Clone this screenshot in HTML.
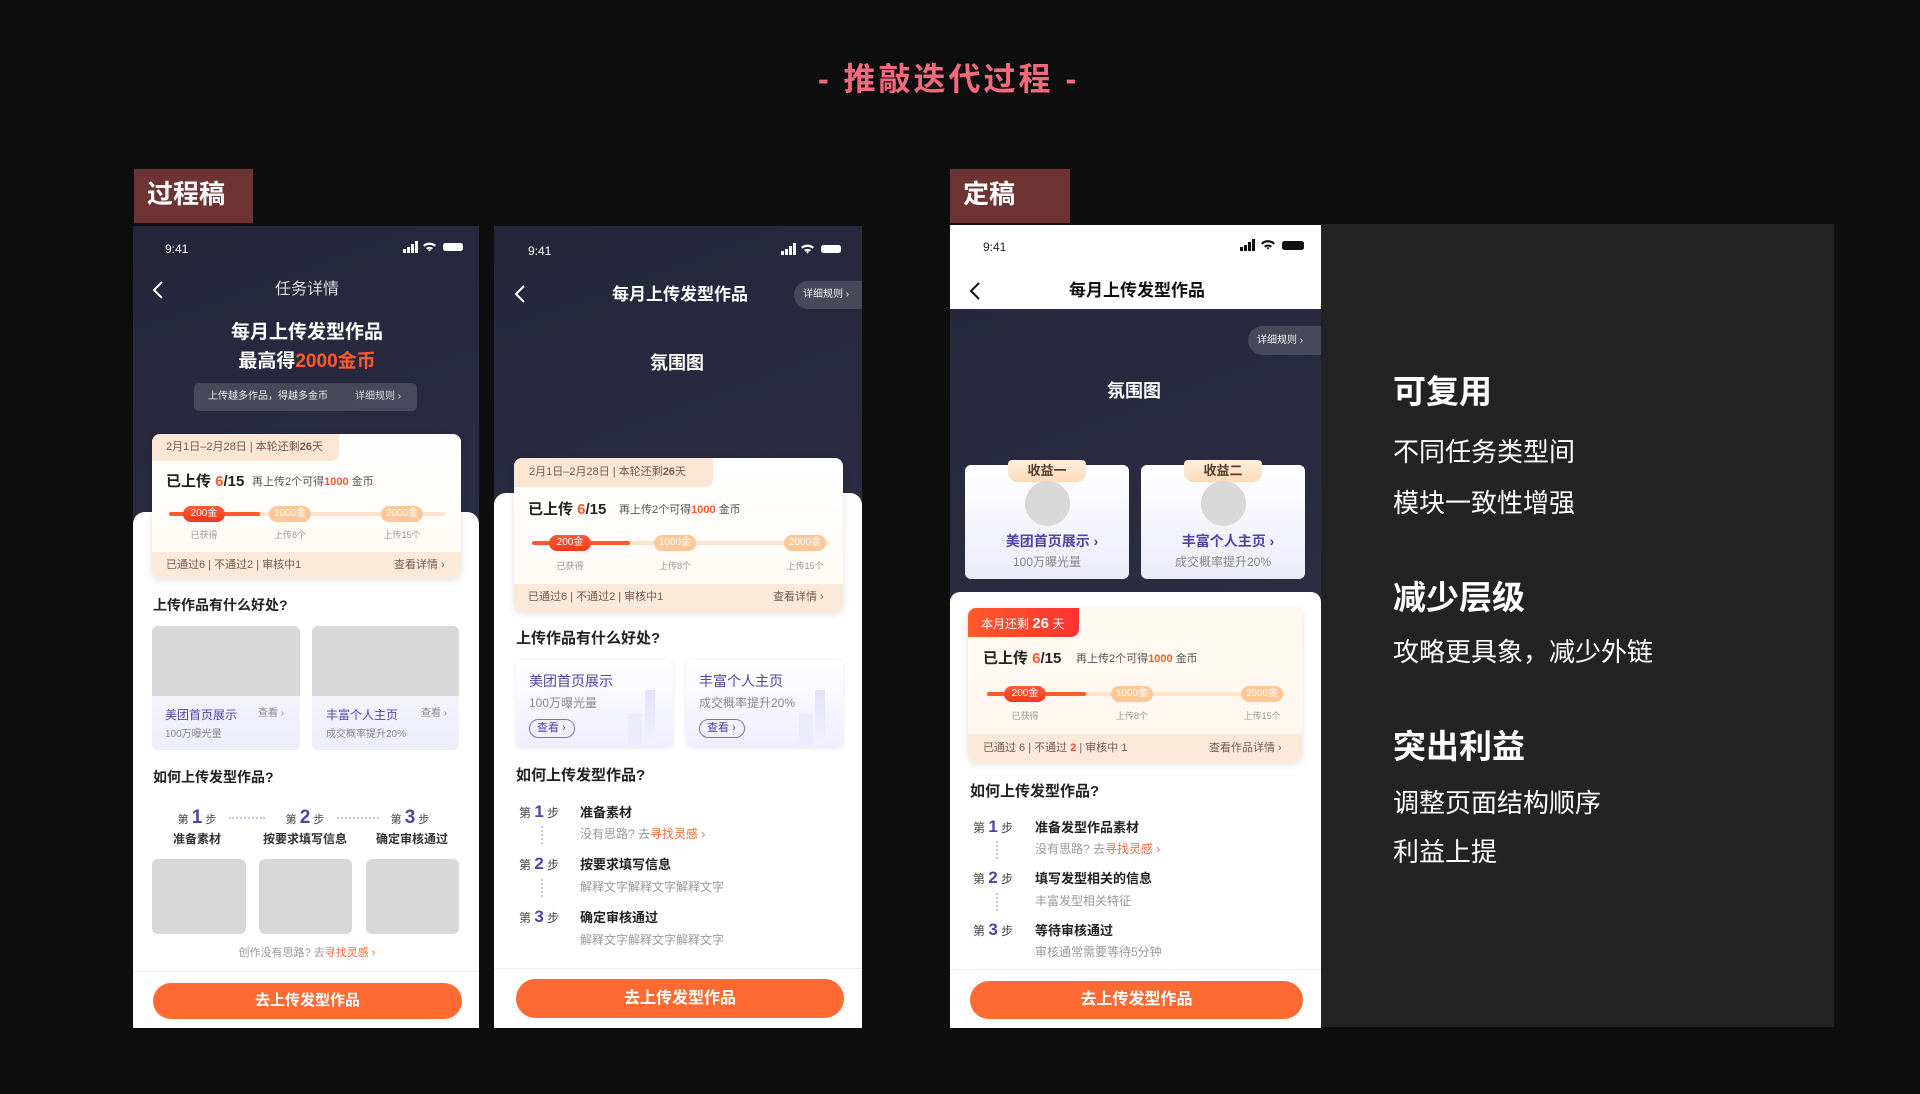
<!DOCTYPE html>
<html><head><meta charset="utf-8"><style>
*{margin:0;padding:0;box-sizing:border-box}
body{width:1920px;height:1094px;background:#0e0e0e;position:relative;overflow:hidden;font-family:"Liberation Sans","Noto Sans CJK SC",sans-serif}
div,span.a{position:absolute}
.t{position:absolute;white-space:nowrap;line-height:1}
.c{transform:translateX(-50%)}
.b{font-weight:bold}
.dark{background:linear-gradient(160deg,#25263a 0%,#2c2d44 55%,#3d3d5c 100%)}
.pill{position:absolute;height:16px;border-radius:8px;color:#fff;font-size:10px;line-height:16px;text-align:center;width:42px}
.on{background:linear-gradient(#ff5a3a,#f03a1a)}
.off{background:#ffc795}
.lab{font-size:9px;color:#999}
.pur{color:#4f44a8}
.g{color:#888}
.btn{position:absolute;background:#ff6a33;border-radius:20px;color:#fff;font-weight:bold;text-align:center}
</style></head><body>

<div class="t b" style="left:818px;top:63px;font-size:32px;color:#f26a7c;letter-spacing:3px">- 推敲迭代过程 -</div>

<!-- labels -->
<div style="left:134px;top:169px;width:119px;height:54px;background:#6e3434"></div>
<div class="t b" style="left:147px;top:181px;font-size:26px;color:#fff">过程稿</div>
<div style="left:950px;top:169px;width:120px;height:54px;background:#6e3434"></div>
<div class="t b" style="left:963px;top:181px;font-size:26px;color:#fff">定稿</div>

<!-- right panel -->
<div style="left:1321px;top:224px;width:513px;height:803px;background:#232323"></div>
<div class="t b" style="left:1393px;top:375px;font-size:33px;color:#fff">可复用</div>
<div class="t" style="left:1393px;top:439px;font-size:26px;color:#fff">不同任务类型间</div>
<div class="t" style="left:1393px;top:490px;font-size:26px;color:#fff">模块一致性增强</div>
<div class="t b" style="left:1393px;top:581px;font-size:33px;color:#fff">减少层级</div>
<div class="t" style="left:1393px;top:639px;font-size:26px;color:#fff">攻略更具象，减少外链</div>
<div class="t b" style="left:1393px;top:730px;font-size:33px;color:#fff">突出利益</div>
<div class="t" style="left:1393px;top:790px;font-size:26px;color:#fff">调整页面结构顺序</div>
<div class="t" style="left:1393px;top:839px;font-size:26px;color:#fff">利益上提</div>

<!-- ============ PHONE 1 ============ -->
<div class="dark" style="left:133px;top:226px;width:346px;height:802px"></div>
<div class="t" style="left:165px;top:243px;font-size:12px;color:#fff">9:41</div>
<svg class="a" style="position:absolute;left:403px;top:241px" width="62" height="12"><g fill="#fff"><rect x="0" y="8" width="3" height="4"/><rect x="4" y="6" width="3" height="6"/><rect x="8" y="3" width="3" height="9"/><rect x="12" y="0" width="3" height="12"/><path d="M20 4a10 10 0 0 1 13 0l-1.5 1.6a8 8 0 0 0-10 0z M23 7a6 6 0 0 1 7 0l-1.5 1.6a3.5 3.5 0 0 0-4 0z M26.5 10.5l1.5-1.5-1.5-1-1.5 1z"/><rect x="40" y="2" width="20" height="8" rx="2.5"/></g></svg>
<svg style="position:absolute;left:152px;top:281px" width="12" height="18"><path d="M10 1L2 9l8 8" stroke="#fff" stroke-width="2" fill="none"/></svg>
<div class="t c" style="left:307px;top:282px;font-size:16px;color:#ddd">任务详情</div>
<div class="t c b" style="left:307px;top:323px;font-size:19px;color:#fff">每月上传发型作品</div>
<div class="t c b" style="left:307px;top:352px;font-size:19px;color:#fff">最高得<span style="color:#ff5a2a">2000金币</span></div>
<div style="left:194px;top:383px;width:223px;height:28px;border-radius:5px;background:rgba(255,255,255,.15)"></div>
<div class="t" style="left:208px;top:392px;font-size:10px;color:#eee">上传越多作品，得越多金币</div>
<div class="t" style="left:355px;top:392px;font-size:10px;color:#ddd">详细规则 ›</div>
<div style="left:133px;top:512px;width:346px;height:516px;background:#fff;border-radius:12px 12px 0 0"></div>
<!-- card -->
<div style="left:152px;top:434px;width:309px;height:144px;background:linear-gradient(#fff,#fffaf5);border-radius:8px;box-shadow:0 2px 8px rgba(0,0,0,.12)"></div>
<div style="left:152px;top:434px;width:187px;height:27px;background:#fbe6d4;border-radius:8px 0 8px 0"></div>
<div class="t" style="left:166px;top:442px;font-size:11px;color:#7a5a48">2月1日–2月28日 | 本轮还剩<b>26</b>天</div>
<div class="t b" style="left:166px;top:474px;font-size:15px;color:#222">已上传 <span style="color:#ff5a2a">6</span>/15</div>
<div class="t" style="left:252px;top:477px;font-size:11px;color:#555">再上传2个可得<b style="color:#ff5a2a">1000</b> 金币</div>
<div style="left:169px;top:512px;width:276px;height:4px;border-radius:2px;background:#fde3cc"></div>
<div style="left:169px;top:512px;width:91px;height:4px;border-radius:2px;background:#ff5a2a"></div>
<div class="pill on" style="left:183px;top:506px">200金</div>
<div class="pill off" style="left:269px;top:506px">1000金</div>
<div class="pill off" style="left:381px;top:506px">2000金</div>
<div class="t c lab" style="left:204px;top:531px">已获得</div>
<div class="t c lab" style="left:290px;top:531px">上传8个</div>
<div class="t c lab" style="left:402px;top:531px">上传15个</div>
<div style="left:152px;top:552px;width:309px;height:26px;background:#fbe9d9;border-radius:0 0 8px 8px"></div>
<div class="t" style="left:166px;top:560px;font-size:11px;color:#7a5a48">已通过6 | 不通过2 | 审核中1</div>
<div class="t" style="left:394px;top:560px;font-size:11px;color:#7a5a48">查看详情 ›</div>
<div class="t b" style="left:153px;top:598px;font-size:14px;color:#222">上传作品有什么好处?</div>
<div style="left:152px;top:626px;width:148px;height:124px;border-radius:6px;overflow:hidden;background:linear-gradient(#f8f8ff,#eeedfc)"><div style="left:0;top:0;width:148px;height:70px;background:#d8d8d8"></div></div>
<div style="left:312px;top:626px;width:147px;height:124px;border-radius:6px;overflow:hidden;background:linear-gradient(#f8f8ff,#eeedfc)"><div style="left:0;top:0;width:147px;height:70px;background:#d8d8d8"></div></div>
<div class="t pur" style="left:165px;top:709px;font-size:12px">美团首页展示</div>
<div class="t g" style="left:258px;top:709px;font-size:10px">查看 ›</div>
<div class="t g" style="left:165px;top:730px;font-size:10px">100万曝光量</div>
<div class="t pur" style="left:326px;top:709px;font-size:12px">丰富个人主页</div>
<div class="t g" style="left:421px;top:709px;font-size:10px">查看 ›</div>
<div class="t g" style="left:326px;top:730px;font-size:10px">成交概率提升20%</div>
<div class="t b" style="left:153px;top:770px;font-size:14px;color:#222">如何上传发型作品?</div>
<div class="t c" style="left:197px;top:808px;font-size:11px;color:#444">第 <b class="pur" style="font-size:19px">1</b> 步</div>
<div class="t c" style="left:305px;top:808px;font-size:11px;color:#444">第 <b class="pur" style="font-size:19px">2</b> 步</div>
<div class="t c" style="left:410px;top:808px;font-size:11px;color:#444">第 <b class="pur" style="font-size:19px">3</b> 步</div>
<div style="left:229px;top:817px;width:36px;border-top:2px dotted #c8c4f0"></div>
<div style="left:337px;top:817px;width:42px;border-top:2px dotted #c8c4f0"></div>
<div class="t c b" style="left:197px;top:833px;font-size:12px;color:#333">准备素材</div>
<div class="t c b" style="left:305px;top:833px;font-size:12px;color:#333">按要求填写信息</div>
<div class="t c b" style="left:412px;top:833px;font-size:12px;color:#333">确定审核通过</div>
<div style="left:152px;top:859px;width:94px;height:75px;background:#d8d8d8;border-radius:6px"></div>
<div style="left:259px;top:859px;width:93px;height:75px;background:#d8d8d8;border-radius:6px"></div>
<div style="left:366px;top:859px;width:93px;height:75px;background:#d8d8d8;border-radius:6px"></div>
<div class="t c" style="left:307px;top:948px;font-size:11px;color:#999">创作没有思路? 去<span style="color:#ff6a33">寻找灵感 ›</span></div>
<div style="left:133px;top:971px;width:346px;height:1px;background:#eee"></div>
<div class="btn" style="left:153px;top:983px;width:309px;height:36px;line-height:36px;font-size:15px">去上传发型作品</div>

<!-- ============ PHONE 2 ============ -->
<div class="dark" style="left:494px;top:226px;width:368px;height:802px"></div>
<div class="t" style="left:528px;top:245px;font-size:12px;color:#fff">9:41</div>
<svg style="position:absolute;left:781px;top:243px" width="62" height="12"><g fill="#fff"><rect x="0" y="8" width="3" height="4"/><rect x="4" y="6" width="3" height="6"/><rect x="8" y="3" width="3" height="9"/><rect x="12" y="0" width="3" height="12"/><path d="M20 4a10 10 0 0 1 13 0l-1.5 1.6a8 8 0 0 0-10 0z M23 7a6 6 0 0 1 7 0l-1.5 1.6a3.5 3.5 0 0 0-4 0z M26.5 10.5l1.5-1.5-1.5-1-1.5 1z"/><rect x="40" y="2" width="20" height="8" rx="2.5"/></g></svg>
<svg style="position:absolute;left:514px;top:285px" width="12" height="18"><path d="M10 1L2 9l8 8" stroke="#fff" stroke-width="2" fill="none"/></svg>
<div class="t c b" style="left:680px;top:286px;font-size:17px;color:#fff">每月上传发型作品</div>
<div style="left:794px;top:281px;width:68px;height:28px;border-radius:14px 0 0 14px;background:rgba(255,255,255,.15)"></div>
<div class="t" style="left:803px;top:290px;font-size:10px;color:#eee">详细规则 ›</div>
<div class="t c b" style="left:677px;top:354px;font-size:18px;color:#fff">氛围图</div>
<div style="left:494px;top:493px;width:368px;height:535px;background:#fff;border-radius:12px 12px 0 0"></div>
<div style="left:514px;top:458px;width:329px;height:154px;background:linear-gradient(#fff,#fffaf5);border-radius:8px;box-shadow:0 2px 8px rgba(0,0,0,.12)"></div>
<div style="left:514px;top:458px;width:199px;height:29px;background:#fbe6d4;border-radius:8px 0 8px 0"></div>
<div class="t" style="left:529px;top:467px;font-size:11px;color:#7a5a48">2月1日–2月28日 | 本轮还剩<b>26</b>天</div>
<div class="t b" style="left:528px;top:502px;font-size:15px;color:#222">已上传 <span style="color:#ff5a2a">6</span>/15</div>
<div class="t" style="left:619px;top:505px;font-size:11px;color:#555">再上传2个可得<b style="color:#ff5a2a">1000</b> 金币</div>
<div style="left:532px;top:541px;width:298px;height:4px;border-radius:2px;background:#fde3cc"></div>
<div style="left:532px;top:541px;width:98px;height:4px;border-radius:2px;background:#ff5a2a"></div>
<div class="pill on" style="left:549px;top:535px">200金</div>
<div class="pill off" style="left:654px;top:535px">1000金</div>
<div class="pill off" style="left:784px;top:535px">2000金</div>
<div class="t c lab" style="left:570px;top:562px">已获得</div>
<div class="t c lab" style="left:675px;top:562px">上传8个</div>
<div class="t c lab" style="left:805px;top:562px">上传15个</div>
<div style="left:514px;top:584px;width:329px;height:28px;background:#fbe9d9;border-radius:0 0 8px 8px"></div>
<div class="t" style="left:528px;top:592px;font-size:11px;color:#7a5a48">已通过6 | 不通过2 | 审核中1</div>
<div class="t" style="left:773px;top:592px;font-size:11px;color:#7a5a48">查看详情 ›</div>
<div class="t b" style="left:516px;top:631px;font-size:15px;color:#222">上传作品有什么好处?</div>
<div style="left:516px;top:660px;width:157px;height:87px;border-radius:6px;background:linear-gradient(#fff,#efeefe);box-shadow:0 1px 5px rgba(0,0,0,.1)"></div>
<div style="left:686px;top:660px;width:157px;height:87px;border-radius:6px;background:linear-gradient(#fff,#efeefe);box-shadow:0 1px 5px rgba(0,0,0,.1)"></div>
<div style="left:645px;top:690px;width:10px;height:55px;background:linear-gradient(#e4e2fb,#f2f1fd)"></div>
<div style="left:628px;top:713px;width:14px;height:32px;background:#ecebfc"></div>
<div style="left:815px;top:690px;width:10px;height:55px;background:linear-gradient(#e4e2fb,#f2f1fd)"></div>
<div style="left:799px;top:713px;width:14px;height:32px;background:#ecebfc"></div>
<div class="t pur" style="left:529px;top:674px;font-size:14px">美团首页展示</div>
<div class="t g" style="left:529px;top:697px;font-size:12px">100万曝光量</div>
<div style="left:529px;top:719px;width:46px;height:19px;border:1px solid #7a70c0;border-radius:10px"></div>
<div class="t pur" style="left:537px;top:723px;font-size:11px">查看 ›</div>
<div class="t pur" style="left:699px;top:674px;font-size:14px">丰富个人主页</div>
<div class="t g" style="left:699px;top:697px;font-size:12px">成交概率提升20%</div>
<div style="left:699px;top:719px;width:46px;height:19px;border:1px solid #7a70c0;border-radius:10px"></div>
<div class="t pur" style="left:707px;top:723px;font-size:11px">查看 ›</div>
<div class="t b" style="left:516px;top:768px;font-size:15px;color:#222">如何上传发型作品?</div>
<div class="t" style="left:519px;top:803px;font-size:12px;color:#444">第 <b class="pur" style="font-size:17px">1</b> 步</div>
<div class="t b" style="left:580px;top:806px;font-size:13px;color:#222">准备素材</div>
<div class="t" style="left:580px;top:828px;font-size:12px;color:#999">没有思路? 去<span style="color:#ff6a33">寻找灵感 ›</span></div>
<div style="left:541px;top:826px;height:18px;border-left:2px dotted #c8c4f0"></div>
<div class="t" style="left:519px;top:855px;font-size:12px;color:#444">第 <b class="pur" style="font-size:17px">2</b> 步</div>
<div class="t b" style="left:580px;top:858px;font-size:13px;color:#222">按要求填写信息</div>
<div class="t" style="left:580px;top:881px;font-size:12px;color:#999">解释文字解释文字解释文字</div>
<div style="left:541px;top:879px;height:18px;border-left:2px dotted #c8c4f0"></div>
<div class="t" style="left:519px;top:908px;font-size:12px;color:#444">第 <b class="pur" style="font-size:17px">3</b> 步</div>
<div class="t b" style="left:580px;top:911px;font-size:13px;color:#222">确定审核通过</div>
<div class="t" style="left:580px;top:934px;font-size:12px;color:#999">解释文字解释文字解释文字</div>
<div style="left:494px;top:968px;width:368px;height:1px;background:#eee"></div>
<div class="btn" style="left:516px;top:979px;width:328px;height:39px;line-height:39px;font-size:16px">去上传发型作品</div>

<!-- ============ PHONE 3 ============ -->
<div class="dark" style="left:950px;top:225px;width:371px;height:803px"></div>
<div style="left:950px;top:225px;width:371px;height:84px;background:#fff"></div>
<div class="t" style="left:983px;top:241px;font-size:12px;color:#222">9:41</div>
<svg style="position:absolute;left:1240px;top:239px" width="66" height="12"><g fill="#111"><rect x="0" y="8" width="3" height="4"/><rect x="4" y="6" width="3" height="6"/><rect x="8" y="3" width="3" height="9"/><rect x="12" y="0" width="3" height="12"/><path d="M21 4a10 10 0 0 1 14 0l-1.5 1.6a8 8 0 0 0-11 0z M24 7a6 6 0 0 1 8 0l-1.5 1.6a3.5 3.5 0 0 0-5 0z M28 10.5l1.5-1.5-1.5-1-1.5 1z"/><rect x="42" y="2" width="22" height="9" rx="2.5"/></g></svg>
<svg style="position:absolute;left:969px;top:282px" width="12" height="18"><path d="M10 1L2 9l8 8" stroke="#111" stroke-width="2" fill="none"/></svg>
<div class="t c b" style="left:1137px;top:282px;font-size:17px;color:#111">每月上传发型作品</div>
<div style="left:1248px;top:326px;width:73px;height:29px;border-radius:15px 0 0 15px;background:rgba(255,255,255,.15)"></div>
<div class="t" style="left:1257px;top:336px;font-size:10px;color:#eee">详细规则 ›</div>
<div class="t c b" style="left:1134px;top:382px;font-size:18px;color:#fff">氛围图</div>
<div style="left:965px;top:465px;width:164px;height:114px;border-radius:6px;background:linear-gradient(#fff,#ecebf9)"></div>
<div style="left:1141px;top:465px;width:164px;height:114px;border-radius:6px;background:linear-gradient(#fff,#ecebf9)"></div>
<div style="left:1008px;top:460px;width:78px;height:22px;border-radius:4px 4px 10px 10px;background:linear-gradient(#fff0df,#fcd9b5)"></div>
<div style="left:1184px;top:460px;width:78px;height:22px;border-radius:4px 4px 10px 10px;background:linear-gradient(#fff0df,#fcd9b5)"></div>
<div class="t c b" style="left:1047px;top:464px;font-size:13px;color:#5a3a2a">收益一</div>
<div class="t c b" style="left:1223px;top:464px;font-size:13px;color:#5a3a2a">收益二</div>
<div style="left:1025px;top:481px;width:45px;height:45px;border-radius:50%;background:#d8d8d8"></div>
<div style="left:1201px;top:481px;width:45px;height:45px;border-radius:50%;background:#d8d8d8"></div>
<div class="t c b pur" style="left:1052px;top:534px;font-size:14px">美团首页展示 ›</div>
<div class="t c g" style="left:1047px;top:556px;font-size:12px">100万曝光量</div>
<div class="t c b pur" style="left:1228px;top:534px;font-size:14px">丰富个人主页 ›</div>
<div class="t c g" style="left:1223px;top:556px;font-size:12px">成交概率提升20%</div>
<div style="left:950px;top:592px;width:371px;height:436px;background:#fff;border-radius:10px 10px 0 0"></div>
<div style="left:968px;top:608px;width:334px;height:154px;background:linear-gradient(#fff9f2,#fff8ef);border-radius:8px;box-shadow:0 2px 8px rgba(0,0,0,.12)"></div>
<div style="left:968px;top:608px;width:111px;height:29px;background:linear-gradient(90deg,#ff5a2a,#ff3232);border-radius:8px 0 8px 0"></div>
<div class="t" style="left:981px;top:616px;font-size:12px;color:#fff">本月还剩 <b style="font-size:15px">26</b> 天</div>
<div class="t b" style="left:983px;top:651px;font-size:15px;color:#222">已上传 <span style="color:#ff5a2a">6</span>/15</div>
<div class="t" style="left:1076px;top:654px;font-size:11px;color:#555">再上传2个可得<b style="color:#ff5a2a">1000</b> 金币</div>
<div style="left:987px;top:692px;width:298px;height:4px;border-radius:2px;background:#fde3cc"></div>
<div style="left:987px;top:692px;width:99px;height:4px;border-radius:2px;background:#ff5a2a"></div>
<div class="pill on" style="left:1004px;top:686px">200金</div>
<div class="pill off" style="left:1111px;top:686px">1000金</div>
<div class="pill off" style="left:1241px;top:686px">2000金</div>
<div class="t c lab" style="left:1025px;top:712px">已获得</div>
<div class="t c lab" style="left:1132px;top:712px">上传8个</div>
<div class="t c lab" style="left:1262px;top:712px">上传15个</div>
<div style="left:968px;top:734px;width:334px;height:28px;background:#fbe9d9;border-radius:0 0 8px 8px"></div>
<div class="t" style="left:983px;top:743px;font-size:11px;color:#7a5a48">已通过 6 | 不通过 <b style="color:#ff4a2a">2</b> | 审核中 1</div>
<div class="t" style="left:1209px;top:743px;font-size:11px;color:#7a5a48">查看作品详情 ›</div>
<div class="t b" style="left:970px;top:784px;font-size:15px;color:#222">如何上传发型作品?</div>
<div class="t" style="left:973px;top:818px;font-size:12px;color:#444">第 <b class="pur" style="font-size:17px">1</b> 步</div>
<div class="t b" style="left:1035px;top:821px;font-size:13px;color:#222">准备发型作品素材</div>
<div class="t" style="left:1035px;top:843px;font-size:12px;color:#999">没有思路? 去<span style="color:#ff6a33">寻找灵感 ›</span></div>
<div style="left:996px;top:841px;height:18px;border-left:2px dotted #c8c4f0"></div>
<div class="t" style="left:973px;top:869px;font-size:12px;color:#444">第 <b class="pur" style="font-size:17px">2</b> 步</div>
<div class="t b" style="left:1035px;top:872px;font-size:13px;color:#222">填写发型相关的信息</div>
<div class="t" style="left:1035px;top:895px;font-size:12px;color:#999">丰富发型相关特征</div>
<div style="left:996px;top:893px;height:18px;border-left:2px dotted #c8c4f0"></div>
<div class="t" style="left:973px;top:921px;font-size:12px;color:#444">第 <b class="pur" style="font-size:17px">3</b> 步</div>
<div class="t b" style="left:1035px;top:924px;font-size:13px;color:#222">等待审核通过</div>
<div class="t" style="left:1035px;top:946px;font-size:12px;color:#999">审核通常需要等待5分钟</div>
<div style="left:950px;top:969px;width:371px;height:1px;background:#eee"></div>
<div class="btn" style="left:970px;top:981px;width:333px;height:38px;line-height:38px;font-size:16px">去上传发型作品</div>

</body></html>
